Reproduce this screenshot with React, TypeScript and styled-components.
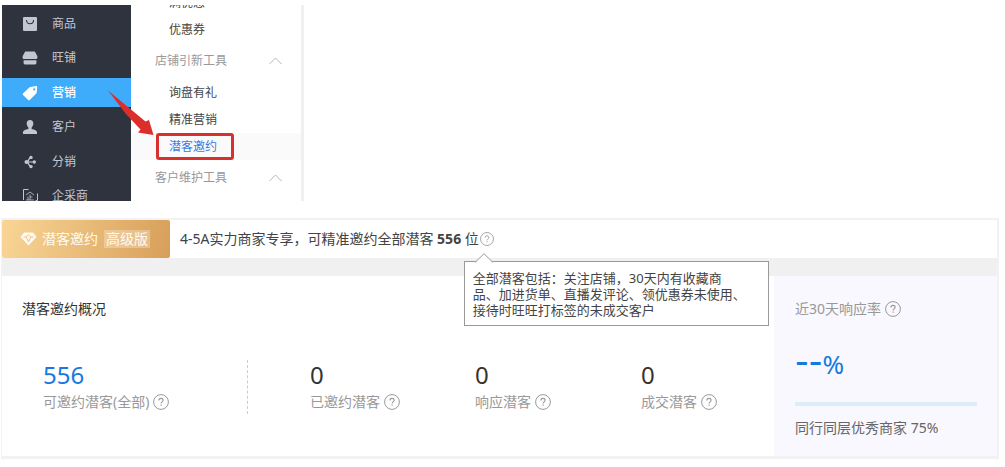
import React from "react";
import styled, { createGlobalStyle } from "styled-components";

const Global = createGlobalStyle`
  *, *::before, *::after { box-sizing: border-box; }
  body {
    margin: 0;
    background: #fff;
    color: #444;
    font: 14px/20px "Noto Sans", "Noto Sans CJK SC", sans-serif;
  }
  button { font: inherit; color: inherit; }
`;

const Page = styled.main`
  padding: 5px 6px 8px 1px;
`;

const Menus = styled.div`
  position: relative;
  display: flex;
  height: 196px;
  margin-left: 1px;
  overflow: hidden;
  font-size: 12px;
`;

const SideNav = styled.nav`
  display: flex;
  flex-direction: column;
  justify-content: space-between;
  width: 129px;
  height: 206px;
  padding-top: 4px;
  background: #2f333e;
`;

const NavLink = styled.a<{ $active?: boolean }>`
  display: flex;
  align-items: center;
  gap: 14px;
  height: 29px;
  padding-left: 20px;
  color: ${(p) => (p.$active ? "#fff" : "#c3c6d1")};
  background: ${(p) => (p.$active ? "#3eacfb" : "transparent")};
  font-weight: ${(p) => (p.$active ? 500 : 400)};
  text-decoration: none;
`;

const NavIcon = styled.svg`
  width: 16px;
  height: 16px;
  flex: none;
`;

const SubMenu = styled.nav`
  display: flex;
  flex-direction: column;
  justify-content: flex-end;
  width: 173px;
  padding-bottom: 5px;
  border-right: 3px solid #f0f0f0;
`;

const SubLink = styled.a<{ $active?: boolean }>`
  display: flex;
  flex: none;
  align-items: center;
  height: 27px;
  padding-left: ${(p) => (p.$active ? 25 : 38)}px;
  color: ${(p) => (p.$active ? "#3b7ce0" : "#444")};
  background: ${(p) => (p.$active ? "#fafafa" : "transparent")};
  text-decoration: none;
`;

const Marked = styled.span`
  display: flex;
  align-items: center;
  width: 78px;
  height: 27px;
  padding-left: 10px;
  border: 3px solid #d8302c;
  border-radius: 3px;
`;

const Group = styled.button`
  display: flex;
  flex: none;
  align-items: center;
  justify-content: space-between;
  height: 36px;
  padding: 0 19px 0 24px;
  border: 0;
  background: none;
  color: #999;
`;

const Arrow = styled.svg`
  position: absolute;
  left: 102px;
  top: 83px;
  width: 50px;
  height: 50px;
`;

const Frame = styled.section`
  margin-top: 17px;
  border: solid #f2f2f2;
  border-width: 2px 2px 3px 1px;
  background: #f0f0f0;
`;

const Banner = styled.header`
  display: flex;
  align-items: center;
  gap: 10px;
  height: 38px;
  margin-bottom: 18px;
  background: #fff;
`;

const Badge = styled.div`
  display: flex;
  align-items: center;
  align-self: stretch;
  width: 168px;
  padding-left: 18px;
  border-radius: 2px;
  color: #fffaf0;
  background: linear-gradient(100deg, #f9d596 0%, #e9bb78 50%, #d79f5a 100%);
`;

const BadgeName = styled.span`
  margin: 0 6px 0 5px;
`;

const Tier = styled.span`
  padding: 0 2px;
  line-height: 18px;
  background: rgba(255, 255, 255, 0.28);
`;

const Sentence = styled.p`
  display: flex;
  align-items: center;
  margin: 0;
  white-space: pre;
`;

const HelpButton = styled.button<{ $small?: boolean }>`
  position: relative;
  display: block;
  flex: none;
  width: ${(p) => (p.$small ? 14 : 16)}px;
  height: ${(p) => (p.$small ? 14 : 16)}px;
  margin-left: ${(p) => (p.$small ? 1 : 4)}px;
  padding: 0;
  border: 0;
  background: none;
  color: #999;

  > svg {
    display: block;
    width: 100%;
    height: 100%;
  }
`;

const Tip = styled.span`
  position: absolute;
  z-index: 1;
  top: 29px;
  left: -16px;
  width: 305px;
  padding: 8px 8px 7px;
  border: 1px solid #999;
  background: #fff;
  color: #444;
  font-size: 13px;
  line-height: 16px;
  text-align: left;
  white-space: pre;
`;

const Caret = styled.svg`
  position: absolute;
  top: -9px;
  left: 10px;
  width: 18px;
  height: 10px;
`;

const Columns = styled.div`
  display: grid;
  grid-template-columns: 772fr 223fr;
`;

const Overview = styled.div`
  padding: 23px 0 42px;
  background: #fff;
`;

const Title = styled.h2`
  margin: 0 0 41px 20px;
  color: #333;
  font-size: 14px;
  font-weight: 400;
  line-height: 20px;
`;

const Stats = styled.div`
  display: grid;
  grid-template-columns: 205fr 227fr 166fr 133fr;
  margin-left: 41px;
`;

const Stat = styled.div`
  height: 54px;
`;

const TotalStat = styled(Stat)`
  border-right: 1px dashed #ccc;
`;

const FirstStat = styled(Stat)`
  padding-left: 62px;
`;

const Figure = styled.div<{ $blue?: boolean }>`
  margin-bottom: 2px;
  color: ${(p) => (p.$blue ? "#1679e0" : "#333")};
  font-size: 24px;
  line-height: 30px;
`;

const Label = styled.div`
  display: flex;
  align-items: center;
  color: #999;
  white-space: nowrap;
`;

const Rate = styled.aside`
  padding: 23px 20px 18px 21px;
  background: #f8f8fe;
`;

const RateFigure = styled.div`
  display: flex;
  align-items: baseline;
  height: 30px;
  margin: 27px 0 26px;
  color: #1679e0;
  font-size: 26px;
  line-height: 30px;
`;

const Dashes = styled.span`
  font-family: "DejaVu Sans", sans-serif;
  font-size: 38px;
`;

const Track = styled.div`
  height: 4px;
  margin-bottom: 12px;
  background: #dcedfa;
`;

const Peers = styled.div`
  color: #666;
  white-space: nowrap;
`;

function Help({ small, children }: { small?: boolean; children?: React.ReactNode }) {
  return (
    <HelpButton type="button" $small={small} aria-label="说明">
      <svg viewBox="0 0 16 16" fill="none" stroke="currentColor">
        <circle cx="8" cy="8" r="7.4" />
        <path d="M5.9 6.5c0-1.3.9-2.1 2.1-2.1s2.1.8 2.1 1.9c0 1.5-2 1.6-2 3.2M8.1 10.6v1.2" strokeWidth="1.1" />
      </svg>
      {children}
    </HelpButton>
  );
}

function Chevron() {
  return (
    <svg width="13" height="8" viewBox="0 0 13 8" fill="none" stroke="#b5b5b5">
      <path d="M.5 7 6.5 1l6 6" />
    </svg>
  );
}

const navItems = [
  {
    name: "商品",
    icon: (
      <>
        <rect x="1" y="1" width="14" height="14" rx="1" fill="currentColor" />
        <path d="M4.500 4c0 5 7 5 7 0" fill="none" stroke="#2f333e" strokeWidth="1.100" />
      </>
    ),
  },
  {
    name: "旺铺",
    icon: (
      <path
        fill="currentColor"
        d="M3.200 1.500h9.600l2.600 4.700v1.200c0 1-.8 1.600-1.600 1.600H2.200c-.9 0-1.600-.7-1.600-1.600V6.200zM1.600 10.200h12.800v2.800c0 .9-.5 1.400-1.400 1.400H3c-.9 0-1.400-.5-1.400-1.400z"
      />
    ),
  },
  {
    name: "营销",
    active: true,
    icon: (
      <path
        fill="currentColor"
        fillRule="evenodd"
        d="M8.300 1.900 14 1.100c.7-.1 1.200.3 1.200 1l-.5 5.500c0 .4-.2.7-.5 1l-6.400 6.300c-.5.5-1.100.5-1.600 0L1 10c-.5-.5-.5-1.100 0-1.600l6.300-6c.3-.3.6-.4 1-.5zM12.200 3.300a1.100 1.100 0 1 0 0 2.200 1.100 1.100 0 0 0 0-2.200z"
      />
    ),
  },
  {
    name: "客户",
    icon: (
      <path
        fill="currentColor"
        d="M8 1C5.900 1 4.700 2.500 4.700 4.500c0 1.800.8 3.200 1.700 4v1.300C5.800 10.500 1 10.700 1 13.300V15h14v-1.700c0-2.600-4.800-2.800-5.400-3.500V8.500c.9-.8 1.700-2.200 1.700-4C11.300 2.500 10.100 1 8 1z"
      />
    ),
  },
  {
    name: "分销",
    icon: (
      <>
        <path d="M5 8h7M9 3.500C7 4.500 6 6 6 8s1 3.500 3 4.500" fill="none" stroke="currentColor" strokeWidth="1.100" />
        <g fill="currentColor">
          <circle cx="4.500" cy="8" r="2" />
          <circle cx="9" cy="3.400" r="1.700" />
          <circle cx="12.300" cy="8" r="1.700" />
          <circle cx="9" cy="12.600" r="1.700" />
        </g>
      </>
    ),
  },
  {
    name: "企采商",
    icon: (
      <g fill="none" stroke="currentColor">
        <path d="M1.500 12V1.500h5M15.500 5.500v7h-2" />
        <path d="M4 7 8 4l4 3M8 6.500V12M6 8.500V12M8 9h2.500M4 12h8" strokeWidth=".8" />
      </g>
    ),
  },
];

export default function App() {
  return (
    <Page>
      <Global />
      <Menus>
        <SideNav>
          {navItems.map((item) => (
            <NavLink key={item.name} href="#" $active={item.active}>
              <NavIcon viewBox="0 0 16 16">{item.icon}</NavIcon>
              {item.name}
            </NavLink>
          ))}
        </SideNav>
        <SubMenu>
          <SubLink href="#">满优惠</SubLink>
          <SubLink href="#">优惠券</SubLink>
          <Group type="button">
            店铺引新工具
            <Chevron />
          </Group>
          <SubLink href="#">询盘有礼</SubLink>
          <SubLink href="#">精准营销</SubLink>
          <SubLink href="#" $active>
            <Marked>潜客邀约</Marked>
          </SubLink>
          <Group type="button">
            客户维护工具
            <Chevron />
          </Group>
        </SubMenu>
        <Arrow viewBox="0 0 50 50">
          <path fill="#dc2f2b" d="M4 2.500 41.500 33.500 45 32 49.500 47 34 44.500 36.500 41.500 22 26z" />
        </Arrow>
      </Menus>

      <Frame>
        <Banner>
          <Badge>
            <svg width="17" height="14" viewBox="0 0 17 14">
              <path fill="#fffaf0" d="M4 .5h9L16.500 5 8.500 13.500.5 5z" />
              <path d="M3.500 5h2.800l2.200 5 2.200-5h2.800M6.300 5l2.200-2.300L10.700 5" fill="none" stroke="#efc585" />
            </svg>
            <BadgeName>潜客邀约</BadgeName>
            <Tier>高级版</Tier>
          </Badge>
          <Sentence>
            4-5A实力商家专享，可精准邀约全部潜客 <strong>556</strong> 位
            <Help small>
              <Tip>
                <Caret viewBox="0 0 18 10">
                  <path d="M0 9.500 9 .7l9 8.800" fill="#fff" stroke="#999" />
                </Caret>
                {"全部潜客包括：关注店铺，30天内有收藏商\n品、加进货单、直播发评论、领优惠券未使用、\n接待时旺旺打标签的未成交客户"}
              </Tip>
            </Help>
          </Sentence>
        </Banner>

        <Columns>
          <Overview>
            <Title>潜客邀约概况</Title>
            <Stats>
              <TotalStat>
                <Figure $blue>556</Figure>
                <Label>
                  可邀约潜客(全部)
                  <Help />
                </Label>
              </TotalStat>
              <FirstStat>
                <Figure>0</Figure>
                <Label>
                  已邀约潜客
                  <Help />
                </Label>
              </FirstStat>
              <Stat>
                <Figure>0</Figure>
                <Label>
                  响应潜客
                  <Help />
                </Label>
              </Stat>
              <Stat>
                <Figure>0</Figure>
                <Label>
                  成交潜客
                  <Help />
                </Label>
              </Stat>
            </Stats>
          </Overview>
          <Rate>
            <Label>
              近30天响应率
              <Help />
            </Label>
            <RateFigure>
              <Dashes>--</Dashes>%
            </RateFigure>
            <Track />
            <Peers>同行同层优秀商家 75%</Peers>
          </Rate>
        </Columns>
      </Frame>
    </Page>
  );
}
